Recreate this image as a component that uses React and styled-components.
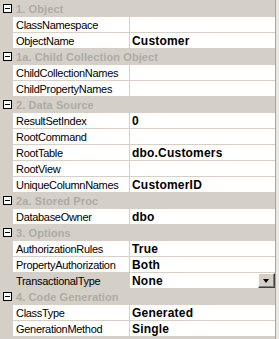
import React from "react";
import styled, { createGlobalStyle } from "styled-components";

const Global = createGlobalStyle`
  html, body { margin: 0; padding: 0; background: #d4d0c8; }
  body { font-family: "Liberation Sans", Arial, sans-serif; }
`;

const Frame = styled.div`
  width: 279px;
  height: 339px;
  display: flex;
  background: #ece9e2;
  overflow: hidden;
`;

const Grid = styled.div`
  width: 275px;
  display: flex;
  flex-direction: column;
  padding-top: 1px;
  background: #d4d0c8;
  border-right: 1px solid #a7a59e;
`;

const Header = styled.div`
  height: 16px;
  display: flex;
  align-items: center;
  background: #d4d0c8;
  box-sizing: border-box;
`;

const Gutter = styled.div`
  width: 13px;
  flex: none;
  display: flex;
  align-items: center;
  justify-content: center;
  align-self: stretch;
`;

const Toggle = styled.div`
  width: 9px;
  height: 9px;
  box-sizing: border-box;
  border: 1px solid #000;
  background: #fff;
  position: relative;
  margin-left: 2px;
  margin-top: -1px;
  &::after {
    content: "";
    position: absolute;
    left: 1px;
    right: 1px;
    top: 3px;
    height: 1px;
    background: #000;
  }
`;

const HeaderText = styled.span`
  font-weight: bold;
  font-size: 11px;
  letter-spacing: 0.1px;
  color: #aeaba3;
  padding-left: 3px;
  white-space: nowrap;
`;

const Row = styled.div`
  height: 16px;
  display: flex;
  background: #d4d0c8;
`;

const Cells = styled.div`
  flex: 1;
  display: flex;
  border-bottom: 1px solid #d4d0c8;
  background: #fff;
`;

const Label = styled.div`
  width: 117px;
  flex: none;
  box-sizing: border-box;
  padding-left: 3px;
  font-size: 11px;
  letter-spacing: -0.3px;
  color: #000;
  display: flex;
  align-items: center;
  white-space: nowrap;
  overflow: hidden;
  border-right: 1px solid #d4d0c8;
  background: ${(p) => (p.$selected ? "#d4d0c8" : "#fff")};
`;

const Value = styled.div`
  flex: 1;
  padding-left: 2px;
  font-size: 12px;
  letter-spacing: 0.2px;
  font-weight: bold;
  color: #000;
  display: flex;
  align-items: center;
  justify-content: space-between;
  white-space: nowrap;
  overflow: hidden;
`;

const DropButton = styled.div`
  width: 17px;
  height: 15px;
  box-sizing: border-box;
  background: #d4d0c8;
  border-top: 1px solid #fff;
  border-left: 1px solid #fff;
  border-right: 1px solid #404040;
  border-bottom: 1px solid #404040;
  box-shadow: inset -1px -1px 0 #808080;
  display: flex;
  align-items: center;
  justify-content: center;
  flex: none;
`;

const Arrow = styled.div`
  width: 0;
  height: 0;
  border-left: 3.5px solid transparent;
  border-right: 3.5px solid transparent;
  border-top: 4px solid #000;
  margin-top: 1px;
  margin-left: -1px;
`;

const data = [
  { h: "1. Object" },
  { n: "ClassNamespace", v: "" },
  { n: "ObjectName", v: "Customer" },
  { h: "1a. Child Collection Object" },
  { n: "ChildCollectionNames", v: "" },
  { n: "ChildPropertyNames", v: "" },
  { h: "2. Data Source" },
  { n: "ResultSetIndex", v: "0" },
  { n: "RootCommand", v: "" },
  { n: "RootTable", v: "dbo.Customers" },
  { n: "RootView", v: "" },
  { n: "UniqueColumnNames", v: "CustomerID" },
  { h: "2a. Stored Proc" },
  { n: "DatabaseOwner", v: "dbo" },
  { h: "3. Options" },
  { n: "AuthorizationRules", v: "True" },
  { n: "PropertyAuthorization", v: "Both" },
  { n: "TransactionalType", v: "None", sel: true },
  { h: "4. Code Generation" },
  { n: "ClassType", v: "Generated" },
  { n: "GenerationMethod", v: "Single" },
];

export default function App() {
  return (
    <>
      <Global />
      <Frame>
        <Grid>
          {data.map((d, i) =>
            d.h ? (
              <Header key={i}>
                <Gutter>
                  <Toggle />
                </Gutter>
                <HeaderText>{d.h}</HeaderText>
              </Header>
            ) : (
              <Row key={i}>
                <Gutter />
                <Cells>
                  <Label $selected={d.sel}>{d.n}</Label>
                  <Value>
                    <span>{d.v}</span>
                    {d.sel && (
                      <DropButton>
                        <Arrow />
                      </DropButton>
                    )}
                  </Value>
                </Cells>
              </Row>
            )
          )}
        </Grid>
      </Frame>
    </>
  );
}
